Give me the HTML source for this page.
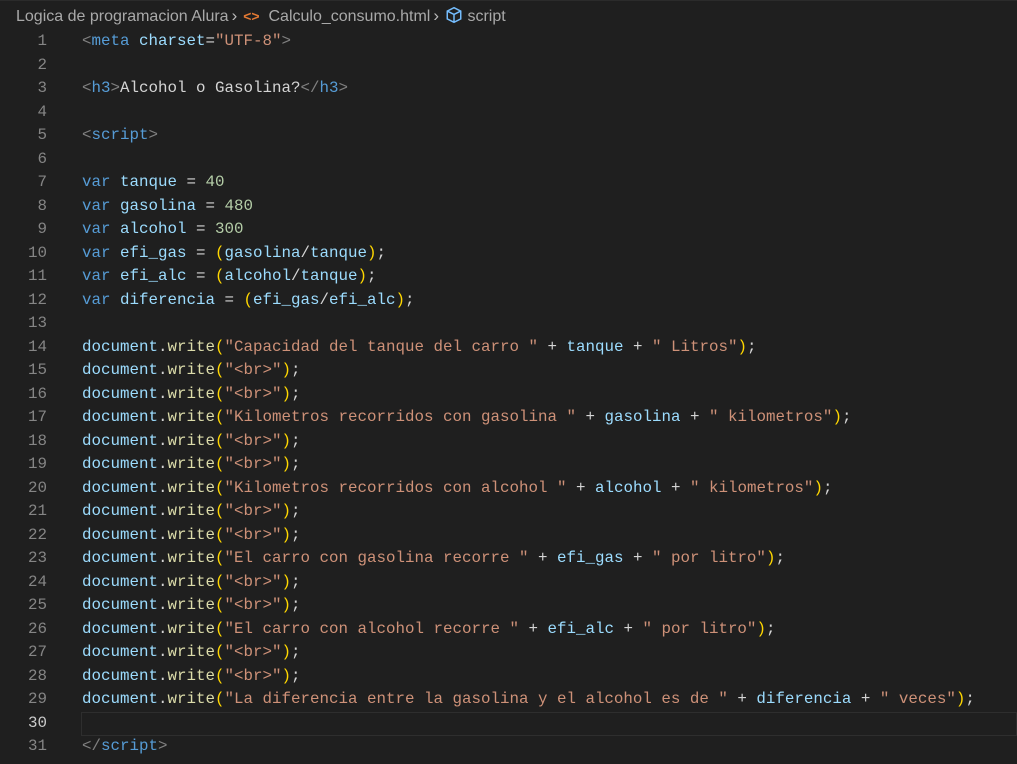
<html><head><style>
body{margin:0;background:#1f1f1f;width:1017px;height:764px;overflow:hidden;font-family:"Liberation Mono",monospace;}
.bc{height:30px;font-family:"Liberation Sans",sans-serif;font-size:16px;color:#a9a9a9;line-height:30px;padding-left:16px;white-space:nowrap;border-top:1px solid #2b2b2b;box-sizing:border-box}
.ch{display:inline-block;margin:0 6px 0 3px;color:#bbb;font-size:17px}
.code{position:absolute;top:30px;left:0;width:1017px}
.l{height:23.53px;line-height:23.53px;font-size:15.83px;white-space:pre;position:relative}
.n{position:absolute;right:970px;color:#858585;text-align:right}
.t{position:absolute;left:82px;color:#d4d4d4}
.cur{position:absolute;left:81px;right:0;top:0;height:22px;border:1px solid #2e2e2e}
.k{color:#569cd6}.v{color:#9cdcfe}.s{color:#ce9178}.f{color:#dcdcaa}.p{color:#ffd700}.g{color:#808080}.m{color:#b5cea8}
</style></head><body>
<div class="bc">Logica de programacion Alura<span class="ch">›</span><span style="color:#e37933;font-weight:bold;font-size:14px">&lt;&gt;</span>&nbsp; Calculo_consumo.html<span class="ch">›</span><svg width="18" height="18" viewBox="0 0 16 16" style="vertical-align:-3px"><path d="M8 1.5L14 4.5V11.5L8 14.5L2 11.5V4.5Z M2 4.5L8 7.5L14 4.5 M8 7.5V14.5" fill="none" stroke="#75beff" stroke-width="1.3"/></svg> script</div>
<div class="code">
<div class="l"><span class="n">1</span><span class="t"><span class="g">&lt;</span><span class="k">meta</span> <span class="v">charset</span>=<span class="s">"UTF-8"</span><span class="g">&gt;</span></span></div>
<div class="l"><span class="n">2</span></div>
<div class="l"><span class="n">3</span><span class="t"><span class="g">&lt;</span><span class="k">h3</span><span class="g">&gt;</span>Alcohol o Gasolina?<span class="g">&lt;/</span><span class="k">h3</span><span class="g">&gt;</span></span></div>
<div class="l"><span class="n">4</span></div>
<div class="l"><span class="n">5</span><span class="t"><span class="g">&lt;</span><span class="k">script</span><span class="g">&gt;</span></span></div>
<div class="l"><span class="n">6</span></div>
<div class="l"><span class="n">7</span><span class="t"><span class="k">var</span> <span class="v">tanque</span> = <span class="m">40</span></span></div>
<div class="l"><span class="n">8</span><span class="t"><span class="k">var</span> <span class="v">gasolina</span> = <span class="m">480</span></span></div>
<div class="l"><span class="n">9</span><span class="t"><span class="k">var</span> <span class="v">alcohol</span> = <span class="m">300</span></span></div>
<div class="l"><span class="n">10</span><span class="t"><span class="k">var</span> <span class="v">efi_gas</span> = <span class="p">(</span><span class="v">gasolina</span>/<span class="v">tanque</span><span class="p">)</span>;</span></div>
<div class="l"><span class="n">11</span><span class="t"><span class="k">var</span> <span class="v">efi_alc</span> = <span class="p">(</span><span class="v">alcohol</span>/<span class="v">tanque</span><span class="p">)</span>;</span></div>
<div class="l"><span class="n">12</span><span class="t"><span class="k">var</span> <span class="v">diferencia</span> = <span class="p">(</span><span class="v">efi_gas</span>/<span class="v">efi_alc</span><span class="p">)</span>;</span></div>
<div class="l"><span class="n">13</span></div>
<div class="l"><span class="n">14</span><span class="t"><span class="v">document</span>.<span class="f">write</span><span class="p">(</span><span class="s">"Capacidad del tanque del carro "</span> + <span class="v">tanque</span> + <span class="s">" Litros"</span><span class="p">)</span>;</span></div>
<div class="l"><span class="n">15</span><span class="t"><span class="v">document</span>.<span class="f">write</span><span class="p">(</span><span class="s">"&lt;br&gt;"</span><span class="p">)</span>;</span></div>
<div class="l"><span class="n">16</span><span class="t"><span class="v">document</span>.<span class="f">write</span><span class="p">(</span><span class="s">"&lt;br&gt;"</span><span class="p">)</span>;</span></div>
<div class="l"><span class="n">17</span><span class="t"><span class="v">document</span>.<span class="f">write</span><span class="p">(</span><span class="s">"Kilometros recorridos con gasolina "</span> + <span class="v">gasolina</span> + <span class="s">" kilometros"</span><span class="p">)</span>;</span></div>
<div class="l"><span class="n">18</span><span class="t"><span class="v">document</span>.<span class="f">write</span><span class="p">(</span><span class="s">"&lt;br&gt;"</span><span class="p">)</span>;</span></div>
<div class="l"><span class="n">19</span><span class="t"><span class="v">document</span>.<span class="f">write</span><span class="p">(</span><span class="s">"&lt;br&gt;"</span><span class="p">)</span>;</span></div>
<div class="l"><span class="n">20</span><span class="t"><span class="v">document</span>.<span class="f">write</span><span class="p">(</span><span class="s">"Kilometros recorridos con alcohol "</span> + <span class="v">alcohol</span> + <span class="s">" kilometros"</span><span class="p">)</span>;</span></div>
<div class="l"><span class="n">21</span><span class="t"><span class="v">document</span>.<span class="f">write</span><span class="p">(</span><span class="s">"&lt;br&gt;"</span><span class="p">)</span>;</span></div>
<div class="l"><span class="n">22</span><span class="t"><span class="v">document</span>.<span class="f">write</span><span class="p">(</span><span class="s">"&lt;br&gt;"</span><span class="p">)</span>;</span></div>
<div class="l"><span class="n">23</span><span class="t"><span class="v">document</span>.<span class="f">write</span><span class="p">(</span><span class="s">"El carro con gasolina recorre "</span> + <span class="v">efi_gas</span> + <span class="s">" por litro"</span><span class="p">)</span>;</span></div>
<div class="l"><span class="n">24</span><span class="t"><span class="v">document</span>.<span class="f">write</span><span class="p">(</span><span class="s">"&lt;br&gt;"</span><span class="p">)</span>;</span></div>
<div class="l"><span class="n">25</span><span class="t"><span class="v">document</span>.<span class="f">write</span><span class="p">(</span><span class="s">"&lt;br&gt;"</span><span class="p">)</span>;</span></div>
<div class="l"><span class="n">26</span><span class="t"><span class="v">document</span>.<span class="f">write</span><span class="p">(</span><span class="s">"El carro con alcohol recorre "</span> + <span class="v">efi_alc</span> + <span class="s">" por litro"</span><span class="p">)</span>;</span></div>
<div class="l"><span class="n">27</span><span class="t"><span class="v">document</span>.<span class="f">write</span><span class="p">(</span><span class="s">"&lt;br&gt;"</span><span class="p">)</span>;</span></div>
<div class="l"><span class="n">28</span><span class="t"><span class="v">document</span>.<span class="f">write</span><span class="p">(</span><span class="s">"&lt;br&gt;"</span><span class="p">)</span>;</span></div>
<div class="l"><span class="n">29</span><span class="t"><span class="v">document</span>.<span class="f">write</span><span class="p">(</span><span class="s">"La diferencia entre la gasolina y el alcohol es de "</span> + <span class="v">diferencia</span> + <span class="s">" veces"</span><span class="p">)</span>;</span></div>
<div class="l"><div class="cur"></div><span class="n" style="color:#ccc">30</span></div>
<div class="l"><span class="n">31</span><span class="t"><span class="g">&lt;/</span><span class="k">script</span><span class="g">&gt;</span></span></div>
</div>
</body></html>
